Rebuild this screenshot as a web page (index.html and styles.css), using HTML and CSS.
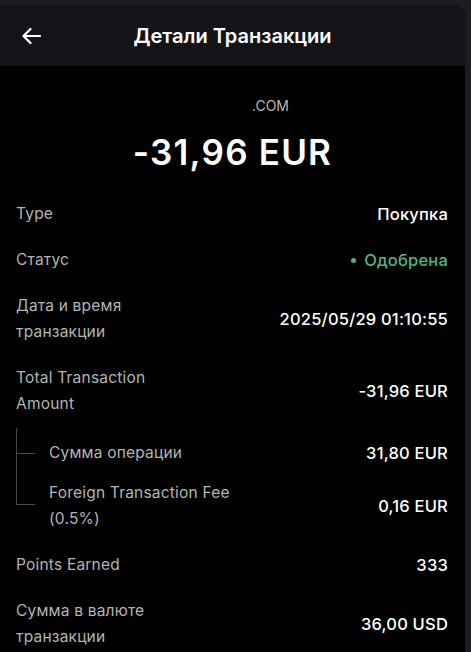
FILE: index.html
```html
<!DOCTYPE html>
<html>
<head>
    <meta charset="UTF-8">
    <meta name="viewport" content="width=device-width, initial-scale=1.0">
    <title>Детали Транзакции</title>
    <link rel="stylesheet" href="styles.css">
</head>
<body>
    <div class="screen">
        <div class="header">
            <button class="back" aria-label="Назад">
                <svg width="20" height="18" viewBox="0 0 20 18">
                    <path d="M19 9H2.5M9.5 2L2.5 9l7 7" fill="none" stroke="#fff" stroke-width="2.2" stroke-linecap="round" stroke-linejoin="round"/>
                </svg>
            </button>
            <h1 class="title">Детали Транзакции</h1>
        </div>
        <div class="summary">
            <div class="merchant">.COM</div>
            <div class="amount">-31,96 EUR</div>
        </div>
        <div class="details">
            <div class="row">
                <div class="label">Type</div>
                <div class="value">Покупка</div>
            </div>
            <div class="row">
                <div class="label">Статус</div>
                <div class="value status"><span class="dot"></span>Одобрена</div>
            </div>
            <div class="row">
                <div class="label">Дата и время<br>транзакции</div>
                <div class="value">2025/05/29 01:10:55</div>
            </div>
            <div class="row">
                <div class="label">Total Transaction<br>Amount</div>
                <div class="value">-31,96 EUR</div>
            </div>
            <div class="breakdown">
                <div class="row sub first">
                    <div class="label">Сумма операции</div>
                    <div class="value">31,80 EUR</div>
                </div>
                <div class="row sub last">
                    <div class="label">Foreign Transaction Fee<br>(0.5%)</div>
                    <div class="value">0,16 EUR</div>
                </div>
            </div>
            <div class="row">
                <div class="label">Points Earned</div>
                <div class="value">333</div>
            </div>
            <div class="row">
                <div class="label">Сумма в валюте<br>транзакции</div>
                <div class="value">36,00 USD</div>
            </div>
        </div>
    </div>
</body>
</html>
```

FILE: styles.css
```css
body {
    margin: 0;
    background-color: #1d1d21;
    font-family: Inter, "Noto Sans", sans-serif;
    color: #fff;
}
.screen {
    margin: 6px 6px 0 0;
    height: 646px;
    background-color: #000;
    border-top-right-radius: 10px;
    overflow: hidden;
}
.header {
    height: 60px;
    background-color: #141418;
    display: flex;
    align-items: center;
    position: relative;
}
.back {
    background: none;
    border: none;
    padding: 0;
    margin-left: 21px;
    display: flex;
    cursor: pointer;
}
.title {
    position: absolute;
    left: 0;
    right: 0;
    margin: 0;
    text-align: center;
    font-size: 20px;
    font-weight: 600;
    pointer-events: none;
}
.summary {
    display: flex;
    flex-direction: column;
    align-items: center;
    padding-top: 30px;
}
.merchant {
    font-size: 14px;
    color: #b8b8b8;
    padding-left: 76px;
    line-height: 20px;
}
.amount {
    font-size: 35px;
    font-weight: 600;
    letter-spacing: 1.2px;
    line-height: 44px;
    margin-top: 14px;
}
.details {
    padding: 27px 17px 0 16px;
    display: flex;
    flex-direction: column;
    gap: 20px;
}
.row {
    display: flex;
    justify-content: space-between;
    align-items: center;
    line-height: 26px;
}
.label {
    color: #b4b4b4;
    font-size: 15.5px;
    letter-spacing: 0.2px;
}
.value {
    font-size: 16.5px;
    font-weight: 500;
    letter-spacing: 0.2px;
    text-align: right;
}
.status {
    color: #4fb487;
    display: flex;
    align-items: center;
}
.dot {
    width: 5px;
    height: 5px;
    border-radius: 50%;
    background-color: #4fb487;
    margin-right: 8px;
}
.breakdown {
    position: relative;
    display: flex;
    flex-direction: column;
    gap: 14px;
    margin-top: -9px;
    padding-top: 12px;
}
.breakdown::before {
    content: "";
    position: absolute;
    left: 0;
    top: 0;
    bottom: 28px;
    border-left: 1px solid #4a4a4a;
}
.sub {
    position: relative;
    padding-left: 33px;
}
.sub::before {
    content: "";
    position: absolute;
    left: 0;
    width: 19px;
    border-top: 1px solid #4a4a4a;
}
.sub.first::before {
    top: 13px;
}
.sub.last::before {
    top: 24px;
}
```
